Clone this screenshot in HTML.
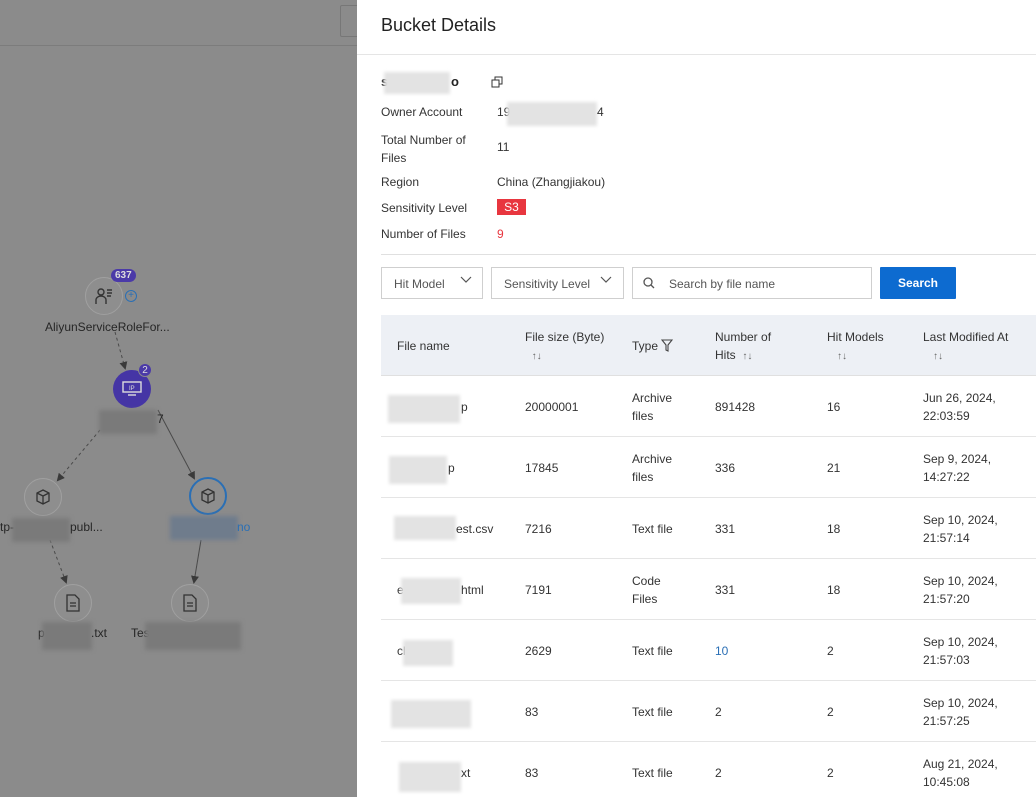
<!DOCTYPE html>
<html><head><meta charset="utf-8"><style>
*{box-sizing:border-box;margin:0;padding:0}
body{width:1036px;height:797px;overflow:hidden;position:relative;font-family:"Liberation Sans",sans-serif;font-size:12px;color:#333;background:#8b8b8b}
.a{position:absolute}
.blur{position:absolute;background:#e3e3e3;filter:blur(1.5px)}
.gblur{position:absolute;background:#7a7a7a;filter:blur(2px)}
.node{position:absolute;width:38px;height:38px;border-radius:50%;background:#8e8e8e;border:1px solid #a0a0a0;display:flex;align-items:center;justify-content:center}
.lt{position:absolute;color:#262626;font-size:12px;white-space:nowrap}
.panel{position:absolute;left:357px;top:0;width:679px;height:797px;background:#fff}
.lbl{position:absolute;left:24px;font-size:12px;color:#333}
.val{position:absolute;left:140px;font-size:12px;color:#333}
.sel{position:absolute;top:267px;height:32px;border:1px solid #cfcfcf;font-size:12px;color:#555;padding:9px 12px}
.th{position:absolute;font-size:12px;color:#333;line-height:18px}
.td{position:absolute;font-size:12px;color:#333;line-height:18px}
.rowline{position:absolute;left:24px;right:0;height:1px;background:#e5e5e5}
.sort{font-size:10px;color:#666}
</style></head><body>
<div class="a" style="left:0;top:45px;width:357px;height:1px;background:#7c7c7c"></div>
<div class="a" style="left:340px;top:5px;width:20px;height:32px;border:1px solid #777;border-radius:2px"></div>
<svg class="a" style="left:0;top:0" width="357" height="797">
<defs><marker id="ar" markerWidth="8" markerHeight="8" refX="6" refY="4" orient="auto"><path d="M0,0 L8,4 L0,8z" fill="#3a3a3a"/></marker></defs>
<g stroke="#4a4a4a" stroke-width="1" fill="none">
<line x1="115" y1="332" x2="125" y2="368" stroke-dasharray="3,3" marker-end="url(#ar)"/>
<line x1="100" y1="430" x2="58" y2="480" stroke-dasharray="3,3" marker-end="url(#ar)"/>
<line x1="158" y1="410" x2="194" y2="478" marker-end="url(#ar)"/>
<line x1="50" y1="540" x2="66" y2="582" stroke-dasharray="3,3" marker-end="url(#ar)"/>
<line x1="201" y1="540" x2="194" y2="582" marker-end="url(#ar)"/>
</g></svg>
<div class="node" style="left:85px;top:277px"><svg width="20" height="18" viewBox="0 0 20 18" fill="none" stroke="#333" stroke-width="1.4"><circle cx="7" cy="5" r="3"/><path d="M2 17v-4c0-2 2-4 5-4s5 2 5 4v4"/><path d="M13 3h5M13 6h5M13 9h4"/></svg></div>
<div class="a" style="left:111px;top:269px;background:#4b3aa8;color:#ddd;border-radius:8px;font-size:10px;padding:0 4px;line-height:13px;font-weight:bold">637</div>
<div class="a" style="left:125px;top:290px;width:12px;height:12px;border:1px solid #2a6fb5;border-radius:50%;color:#2a6fb5;font-size:10px;line-height:10px;text-align:center">+</div>
<div class="lt" style="left:45px;top:320px">AliyunServiceRoleFor...</div>
<div class="a" style="left:113px;top:370px;width:38px;height:38px;border-radius:50%;background:#4535a5;display:flex;align-items:center;justify-content:center"><svg width="20" height="16" viewBox="0 0 20 16" fill="none" stroke="#ddd" stroke-width="1.4"><rect x="1" y="1" width="18" height="10"/><path d="M6 14h8"/><text x="7" y="9" font-size="6" fill="#ddd" stroke="none" font-family="Liberation Sans">IP</text></svg></div>
<div class="a" style="left:138px;top:363px;width:14px;height:14px;border-radius:50%;background:#4b3aa8;color:#ddd;font-size:10px;text-align:center;line-height:14px;border:1px solid #8b8b8b">2</div>
<div class="gblur" style="left:99px;top:410px;width:58px;height:24px"></div>
<div class="lt" style="left:157px;top:412px">7</div>
<div class="node" style="left:24px;top:478px"><svg width="18" height="18" viewBox="0 0 18 18" fill="none" stroke="#333" stroke-width="1.3"><path d="M9 2l6 3v8l-6 3-6-3V5z M3 5l6 3 6-3 M9 8v8"/></svg></div>
<div class="lt" style="left:0;top:520px">tp-</div>
<div class="gblur" style="left:12px;top:518px;width:58px;height:24px"></div>
<div class="lt" style="left:70px;top:520px">publ...</div>
<div class="node" style="left:189px;top:477px;border:2px solid #2a6fb5"><svg width="18" height="18" viewBox="0 0 18 18" fill="none" stroke="#333" stroke-width="1.3"><path d="M9 2l6 3v8l-6 3-6-3V5z M3 5l6 3 6-3 M9 8v8"/></svg></div>
<div class="a" style="left:170px;top:516px;width:68px;height:24px;background:#6f7c8c;filter:blur(2px)"></div>
<div class="lt" style="left:237px;top:520px;color:#2a6fb5">no</div>
<div class="node" style="left:54px;top:584px"><svg width="14" height="18" viewBox="0 0 14 18" fill="none" stroke="#333" stroke-width="1.3"><path d="M1 1h8l4 4v12H1z M4 9h6M4 12h6"/></svg></div>
<div class="node" style="left:171px;top:584px"><svg width="14" height="18" viewBox="0 0 14 18" fill="none" stroke="#333" stroke-width="1.3"><path d="M1 1h8l4 4v12H1z M4 9h6M4 12h6"/></svg></div>
<div class="lt" style="left:38px;top:626px">p</div>
<div class="gblur" style="left:42px;top:622px;width:50px;height:28px"></div>
<div class="lt" style="left:91px;top:626px">.txt</div>
<div class="lt" style="left:131px;top:626px">Tes</div>
<div class="gblur" style="left:145px;top:622px;width:96px;height:28px"></div>

<div class="panel">
<div class="a" style="left:24px;top:15px;font-size:18px;color:#222">Bucket Details</div>
<div class="a" style="left:0;top:54px;width:679px;height:1px;background:#e5e5e5"></div>
<div class="a" style="left:24px;top:74px;font-size:13px;font-weight:bold;color:#222">s</div>
<div class="blur" style="left:27px;top:72px;width:66px;height:22px"></div>
<div class="a" style="left:94px;top:74px;font-size:13px;font-weight:bold;color:#222">o</div>
<svg class="a" style="left:134px;top:76px" width="12" height="12" viewBox="0 0 12 12" fill="none" stroke="#333" stroke-width="1"><rect x="1" y="4" width="7" height="7"/><path d="M4 4V1h7v7H8"/></svg>
<div class="lbl" style="top:105px">Owner Account</div>
<div class="val" style="top:105px">19</div>
<div class="blur" style="left:150px;top:102px;width:90px;height:24px"></div>
<div class="val" style="left:240px;top:105px">4</div>
<div class="lbl" style="top:131px;line-height:18px">Total Number of<br>Files</div>
<div class="val" style="top:140px">11</div>
<div class="lbl" style="top:175px">Region</div>
<div class="val" style="top:175px">China (Zhangjiakou)</div>
<div class="lbl" style="top:201px">Sensitivity Level</div>
<div class="a" style="left:140px;top:199px;width:29px;height:16px;background:#e8363f;color:#fff;font-size:12px;text-align:center;line-height:16px">S3</div>
<div class="lbl" style="top:227px">Number of Files</div>
<div class="val" style="top:227px;color:#e8363f">9</div>
<div class="a" style="left:24px;top:254px;width:655px;height:1px;background:#e0e0e0"></div>

<div class="sel" style="left:24px;width:102px">Hit Model</div>
<svg class="a" style="left:103px;top:276px" width="12" height="8" viewBox="0 0 12 8" fill="none" stroke="#555" stroke-width="1.2"><path d="M1 1l5 5 5-5"/></svg>
<div class="sel" style="left:134px;width:133px">Sensitivity Level</div>
<svg class="a" style="left:243px;top:276px" width="12" height="8" viewBox="0 0 12 8" fill="none" stroke="#555" stroke-width="1.2"><path d="M1 1l5 5 5-5"/></svg>
<div class="sel" style="left:275px;width:240px;padding-left:36px">Search by file name</div>
<svg class="a" style="left:286px;top:277px" width="12" height="12" viewBox="0 0 12 12" fill="none" stroke="#555" stroke-width="1.3"><circle cx="5" cy="5" r="4"/><path d="M8 8l3 3"/></svg>
<div class="a" style="left:523px;top:267px;width:76px;height:32px;background:#0d6bd0;color:#fff;font-size:12px;font-weight:bold;text-align:center;line-height:32px;border-radius:1px">Search</div>

<div class="a" style="left:24px;top:315px;width:655px;height:61px;background:#edf0f5;border-bottom:1px solid #e0e0e0"></div>
<div class="th" style="left:40px;top:337px">File name</div>
<div class="th" style="left:168px;top:328px">File size (Byte)<br>&nbsp;&nbsp;<span class="sort">↑↓</span></div>
<div class="th" style="left:275px;top:337px">Type <svg width="12" height="13" viewBox="0 0 12 13" fill="none" stroke="#444" stroke-width="1.1" style="vertical-align:-2px"><path d="M1 1h10L7 6v6L5 11V6z"/></svg></div>
<div class="th" style="left:358px;top:328px">Number of<br>Hits &nbsp;<span class="sort">↑↓</span></div>
<div class="th" style="left:470px;top:328px">Hit Models<br>&nbsp;&nbsp;&nbsp;<span class="sort">↑↓</span></div>
<div class="th" style="left:566px;top:328px">Last Modified At<br>&nbsp;&nbsp;&nbsp;<span class="sort">↑↓</span></div>

<div class="rowline" style="top:436px"></div>
<div class="rowline" style="top:497px"></div>
<div class="rowline" style="top:558px"></div>
<div class="rowline" style="top:619px"></div>
<div class="rowline" style="top:680px"></div>
<div class="rowline" style="top:741px"></div>

<div class="blur" style="left:31px;top:395px;width:72px;height:28px"></div><div class="td" style="left:104px;top:398px">p</div>
<div class="td" style="left:168px;top:398px">20000001</div>
<div class="td" style="left:275px;top:389px">Archive<br>files</div>
<div class="td" style="left:358px;top:398px">891428</div>
<div class="td" style="left:470px;top:398px">16</div>
<div class="td" style="left:566px;top:389px">Jun 26, 2024,<br>22:03:59</div>

<div class="blur" style="left:32px;top:456px;width:58px;height:28px"></div><div class="td" style="left:91px;top:459px">p</div>
<div class="td" style="left:168px;top:459px">17845</div>
<div class="td" style="left:275px;top:450px">Archive<br>files</div>
<div class="td" style="left:358px;top:459px">336</div>
<div class="td" style="left:470px;top:459px">21</div>
<div class="td" style="left:566px;top:450px">Sep 9, 2024,<br>14:27:22</div>

<div class="blur" style="left:37px;top:516px;width:62px;height:24px"></div><div class="td" style="left:99px;top:520px">est.csv</div>
<div class="td" style="left:168px;top:520px">7216</div>
<div class="td" style="left:275px;top:520px">Text file</div>
<div class="td" style="left:358px;top:520px">331</div>
<div class="td" style="left:470px;top:520px">18</div>
<div class="td" style="left:566px;top:511px">Sep 10, 2024,<br>21:57:14</div>

<div class="td" style="left:40px;top:581px">e</div><div class="blur" style="left:44px;top:578px;width:60px;height:26px"></div><div class="td" style="left:104px;top:581px">html</div>
<div class="td" style="left:168px;top:581px">7191</div>
<div class="td" style="left:275px;top:572px">Code<br>Files</div>
<div class="td" style="left:358px;top:581px">331</div>
<div class="td" style="left:470px;top:581px">18</div>
<div class="td" style="left:566px;top:572px">Sep 10, 2024,<br>21:57:20</div>

<div class="td" style="left:40px;top:642px">cl</div><div class="blur" style="left:46px;top:640px;width:50px;height:26px"></div>
<div class="td" style="left:168px;top:642px">2629</div>
<div class="td" style="left:275px;top:642px">Text file</div>
<div class="td" style="left:358px;top:642px;color:#2a6fb5">10</div>
<div class="td" style="left:470px;top:642px">2</div>
<div class="td" style="left:566px;top:633px">Sep 10, 2024,<br>21:57:03</div>

<div class="blur" style="left:34px;top:700px;width:80px;height:28px"></div>
<div class="td" style="left:168px;top:703px">83</div>
<div class="td" style="left:275px;top:703px">Text file</div>
<div class="td" style="left:358px;top:703px">2</div>
<div class="td" style="left:470px;top:703px">2</div>
<div class="td" style="left:566px;top:694px">Sep 10, 2024,<br>21:57:25</div>

<div class="blur" style="left:42px;top:762px;width:62px;height:30px"></div><div class="td" style="left:104px;top:764px">xt</div>
<div class="td" style="left:168px;top:764px">83</div>
<div class="td" style="left:275px;top:764px">Text file</div>
<div class="td" style="left:358px;top:764px">2</div>
<div class="td" style="left:470px;top:764px">2</div>
<div class="td" style="left:566px;top:755px">Aug 21, 2024,<br>10:45:08</div>
</div>
</body></html>
